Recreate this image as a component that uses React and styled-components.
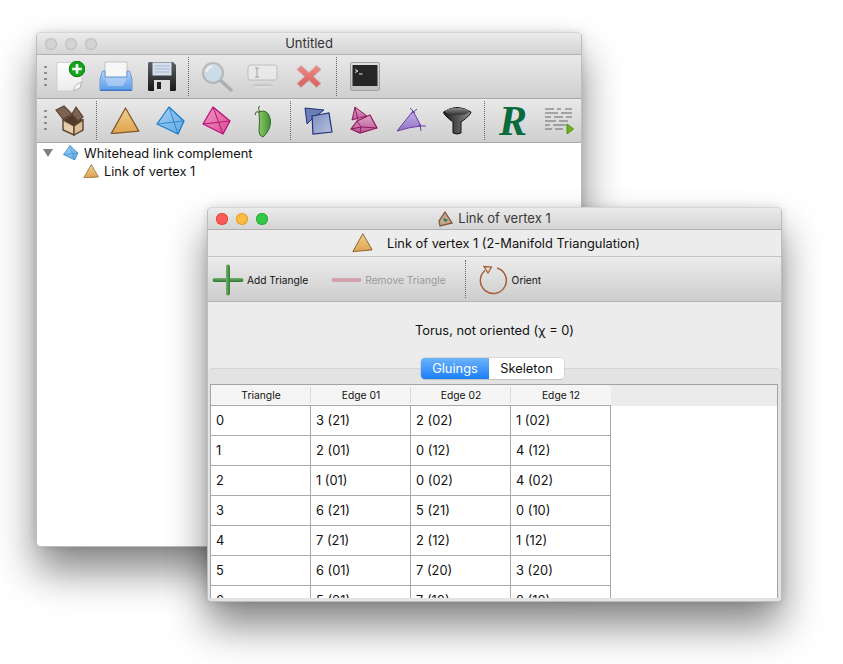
import React from "react";
import styled, { createGlobalStyle } from "styled-components";

const GlobalStyle = createGlobalStyle`
  html, body {
    margin: 0;
    padding: 0;
    background: #fff;
    font-family: "Inter", "Liberation Sans", sans-serif;
    font-size: 12.85px;
    color: #111;
  }
`;

const Desktop = styled.div`
  position: relative;
  width: 843px;
  height: 664px;
  overflow: hidden;
  background: #fff;
`;

const Window = styled.div`
  position: absolute;
  left: ${(p) => p.$x}px;
  top: ${(p) => p.$y}px;
  width: ${(p) => p.$w}px;
  height: ${(p) => p.$h}px;
  display: flex;
  flex-direction: column;
  box-sizing: border-box;
  overflow: hidden;
  background: ${(p) => p.$bg};
  border: 1px solid #bdbdbd;
  border-top-color: #d6d6d6;
  border-radius: 5px;
  box-shadow: 0 24px 40px rgba(0, 0, 0, 0.48), 0 0 8px rgba(0, 0, 0, 0.12);
`;

const TitleBar = styled.div`
  position: relative;
  flex: none;
  height: 21px;
  box-sizing: content-box;
  display: flex;
  align-items: center;
  justify-content: center;
  gap: 5px;
  line-height: 23px;
  background: linear-gradient(#ebebeb, #d5d4d5);
  border-bottom: 1px solid #b1b1b1;
  color: ${(p) => (p.$dim ? "#3a3a3a" : "#333")};
  font-size: 13px;
`;

const Lights = styled.div`
  position: absolute;
  left: 8px;
  top: 5px;
  display: flex;
  gap: 8px;
`;

const Light = styled.span`
  width: 12px;
  height: 12px;
  border-radius: 50%;
  background: ${(p) => p.$c};
  box-shadow: inset 0 0 0 1px ${(p) => p.$b};
`;

const Toolbar = styled.div`
  flex: none;
  height: 43px;
  display: flex;
  align-items: stretch;
  padding-left: 7px;
  overflow: hidden;
  background: linear-gradient(#e9e9e9, #cfcfcf);
  border-bottom: 1px solid #a9a9a9;
`;

const Grip = styled.span`
  flex: none;
  width: 3px;
  align-self: center;
  height: 25px;
  background: radial-gradient(circle, #8a8a8a 1.1px, transparent 1.3px) 0 0 / 3px 6px repeat-y;
`;

const Slot = styled.div`
  flex: none;
  width: 46px;
  display: flex;
  align-items: center;
  justify-content: center;
`;

const Sep = styled.span`
  flex: none;
  width: 0;
  margin: 2px 5px 2px ${(p) => p.$l ?? 4}px;
  border-left: 1px dotted #666;
`;

const RGlyph = styled.span`
  font-family: "Liberation Serif", serif;
  font-style: italic;
  font-weight: 700;
  font-size: 42px;
  line-height: 36px;
  color: #0a6b3c;
`;

const Tree = styled.div`
  flex: 1;
  background: #fff;
  padding-top: 1px;
`;

const TreeRow = styled.div`
  height: 18px;
  display: flex;
  align-items: center;
  gap: 5px;
  padding-left: ${(p) => p.$indent}px;
`;

const Disclosure = styled.span`
  width: 0;
  height: 0;
  margin-right: 5px;
  border-left: 5px solid transparent;
  border-right: 5px solid transparent;
  border-top: 8px solid #808080;
`;

const Header = styled.div`
  flex: none;
  height: 26px;
  display: flex;
  align-items: center;
  justify-content: center;
  gap: 14px;
  padding-left: 3px;
  background: #ececec;
  border-bottom: 1px solid #c4c4c4;
`;

const ActionBar = styled.div`
  flex: none;
  height: 44px;
  display: flex;
  align-items: center;
  padding-left: 4px;
  background: linear-gradient(#ececec, #cdcdcd);
  border-bottom: 1px solid #b4b4b4;
`;

const Action = styled.div`
  display: flex;
  align-items: center;
  gap: ${(p) => p.$gap}px;
  margin-right: ${(p) => p.$mr ?? 0}px;
  padding-top: 2px;
  font-size: 10.2px;
  color: ${(p) => (p.$off ? "#9a9a9a" : "#111")};
`;

const ActionSep = styled.span`
  align-self: stretch;
  width: 0;
  margin: 3px 12px 3px 0;
  border-left: 1px dotted #666;
`;

const Summary = styled.div`
  flex: none;
  height: 56px;
  display: flex;
  align-items: center;
  justify-content: center;
  background: #ececec;
`;

const Pane = styled.div`
  flex: 1;
  min-height: 0;
  display: flex;
  flex-direction: column;
  background: #ececec;
`;

const Tabs = styled.div`
  position: relative;
  z-index: 1;
  flex: none;
  align-self: flex-start;
  margin-left: 213px;
  display: flex;
  height: 21px;
  border-radius: 4px;
  overflow: hidden;
  background: #fff;
  box-shadow: 0 0 0 0.5px #c2c2c2, 0 1px 1px rgba(0, 0, 0, 0.15);
`;

const Tab = styled.div`
  width: ${(p) => p.$w}px;
  display: flex;
  align-items: center;
  justify-content: center;
  color: ${(p) => (p.$on ? "#fff" : "#111")};
  background: ${(p) => (p.$on ? "linear-gradient(#6cb3fa, #1a7ff8)" : "#fff")};
`;

const TabBody = styled.div`
  flex: 1;
  min-height: 0;
  margin-top: -11px;
  padding: 15px 3px 3px 2px;
  display: flex;
  background: #e3e3e3;
  border-top: 1px solid #d6d6d6;
  border-radius: 5px 5px 0 0;
`;

const Table = styled.div`
  flex: 1;
  min-height: 0;
  overflow: hidden;
  background: #fff;
  border: 1px solid #a3a3a3;
  border-bottom: none;
`;

const HeadRow = styled.div`
  height: 21px;
  display: flex;
  background: #ebebeb;
`;

const HeadCell = styled.div`
  position: relative;
  width: 100px;
  box-sizing: border-box;
  display: flex;
  align-items: center;
  justify-content: center;
  font-size: 10.3px;
  background: #f5f5f5;
  border-bottom: 1px solid #a9a9a9;
  &:not(:last-child)::after {
    content: "";
    position: absolute;
    right: 0;
    top: 2px;
    bottom: 2px;
    width: 1px;
    background: #dcdcdc;
  }
`;

const Row = styled.div`
  height: 30px;
  display: flex;
`;

const Cell = styled.div`
  width: 100px;
  box-sizing: border-box;
  display: flex;
  align-items: center;
  padding-left: 5px;
  border-right: 1px solid #a9a9a9;
  border-bottom: 1px solid #a9a9a9;
`;

const rows = [
  ["0", "3 (21)", "2 (02)", "1 (02)"],
  ["1", "2 (01)", "0 (12)", "4 (12)"],
  ["2", "1 (01)", "0 (02)", "4 (02)"],
  ["3", "6 (21)", "5 (21)", "0 (10)"],
  ["4", "7 (21)", "2 (12)", "1 (12)"],
  ["5", "6 (01)", "7 (20)", "3 (20)"],
  ["6", "5 (01)", "7 (10)", "8 (10)"],
];

const Gradient = ({ id, from, to, x2 = 0, y2 = 1 }) => (
  <defs>
    <linearGradient id={id} x1="0" y1="0" x2={x2} y2={y2}>
      <stop offset="0" stopColor={from} />
      <stop offset="1" stopColor={to} />
    </linearGradient>
  </defs>
);

const NewDocIcon = () => (
  <svg width="30" height="31" viewBox="0 0 30 31">
    <Gradient id="docFill" from="#ffffff" to="#ececec" />
    <path d="M2 1.5H27V21L18.5 30H2Z" fill="url(#docFill)" stroke="#cfcfcf" />
    <path d="M18.5 30Q18.5 23 27 21Q25 24 25.5 26.5Z" fill="#f4f4f4" stroke="#b5b5b5" />
    <circle cx="22" cy="8" r="7.8" fill="#11a51a" stroke="#0b7f13" />
    <path d="M22 3.2V12.8M17.2 8H26.8" stroke="#fff" strokeWidth="2.6" />
  </svg>
);

const PrinterIcon = () => (
  <svg width="34" height="32" viewBox="0 0 34 32">
    <Gradient id="printBody" from="#b3d2f6" to="#5b9bea" />
    <rect x="6" y="1" width="22" height="20" fill="#f7f7f7" stroke="#c6c6c6" />
    <path d="M3.5 10H6V16H28V10H30.5L33 18V29.5H1V18Z" fill="url(#printBody)" stroke="#6b9ad6" />
    <path d="M6 17H28L24 25H9Z" fill="#b6d1f3" opacity="0.7" />
    <rect x="1.5" y="28.5" width="31" height="1.5" fill="#3d77c4" />
  </svg>
);

const SaveIcon = () => (
  <svg width="30" height="31" viewBox="0 0 30 31">
    <Gradient id="saveBody" from="#5d6165" to="#17191b" />
    <path d="M1 2.5Q1 1 2.5 1H26L29 4V28.5Q29 30 27.5 30H2.5Q1 30 1 28.5Z" fill="url(#saveBody)" />
    <rect x="5.5" y="1.5" width="19" height="13" fill="#d6e0ec" />
    <path d="M7.5 5H22.5M7.5 8H22.5M7.5 11H22.5" stroke="#a3b5ce" />
    <rect x="7" y="19" width="16" height="11" fill="#dcdcdc" />
    <rect x="10" y="21" width="4" height="7" fill="#222" />
  </svg>
);

const SearchIcon = () => (
  <svg width="32" height="32" viewBox="0 0 32 32" opacity="0.55">
    <path d="M19 19L30 29" stroke="#8d8d8d" strokeWidth="3.4" strokeLinecap="round" />
    <circle cx="12" cy="12" r="10" fill="#bcdcf2" stroke="#9a9a9a" strokeWidth="2.2" />
    <path d="M5.5 11A7 7 0 0 1 11 5.5" stroke="#fff" strokeWidth="2" fill="none" />
  </svg>
);

const FieldIcon = () => (
  <svg width="32" height="26" viewBox="0 0 32 26" opacity="0.6">
    <Gradient id="fieldFade" from="#9a9a9a" to="#ffffff" />
    <rect x="1" y="1" width="29" height="15" rx="2.5" fill="#f0f0f0" stroke="#a8a8a8" />
    <path d="M8 4H12M8 13H12M10 4V13" stroke="#777" fill="none" />
    <ellipse cx="16" cy="22" rx="12" ry="1.6" fill="url(#fieldFade)" />
  </svg>
);

const CrossIcon = () => (
  <svg width="26" height="25" viewBox="0 0 26 25">
    <Gradient id="crossFill" from="#ee8a86" to="#d85f5b" />
    <path
      d="M5 1.5L13 8.5L20.5 1.5L25 5.5L17.5 12.5L25 19.5L20.5 23.5L13 16.5L5 23.5L1 19.5L8.5 12.5L1 5.5Z"
      fill="url(#crossFill)"
      stroke="#c9b1ae"
      strokeLinejoin="round"
    />
  </svg>
);

const TerminalIcon = () => (
  <svg width="30" height="29" viewBox="0 0 30 29">
    <Gradient id="termFrame" from="#dfdfdf" to="#bdbdbd" />
    <rect x="0.5" y="0.5" width="29" height="28" rx="1.5" fill="url(#termFrame)" stroke="#a2a2a2" />
    <rect x="2.5" y="3" width="25" height="21" fill="#262626" />
    <path d="M5 7.5L8 9L5 10.5" stroke="#eee" fill="none" strokeWidth="0.9" />
    <path d="M9 12H12.5" stroke="#eee" strokeWidth="1" />
  </svg>
);

const BoxIcon = () => (
  <svg width="30" height="31" viewBox="0 0 30 31">
    <path d="M8 15L17 10L28 15L19 21Z" fill="#4f3a2a" stroke="#5d4332" />
    <path d="M8 15L19 21V30L8 25Z" fill="#e3cdaa" stroke="#5d4332" strokeWidth="1.4" />
    <path d="M19 21L28 15V25L19 30Z" fill="#d8bd97" stroke="#5d4332" strokeWidth="1.4" />
    <path d="M1 5L9 1L17 9L8 14Z" fill="#7d6350" stroke="#5d4332" strokeWidth="1.2" />
    <path d="M17 9L21 2L28 12L23 16Z" fill="#7d6350" stroke="#5d4332" strokeWidth="1.2" />
  </svg>
);

const TriangleIcon = ({ size = 30, id = "triFill" }) => (
  <svg width={size} height={size * 0.92} viewBox="0 0 30 28">
    <Gradient id={id} from="#efd08e" to="#dfa24e" />
    <path d="M15.5 1L29 24.5L1 27Z" fill={`url(#${id})`} stroke="#81592f" strokeWidth="1.3" strokeLinejoin="round" />
  </svg>
);

const TetraIcon = ({ size = 30, id = "tetFill" }) => (
  <svg width={size} height={size} viewBox="0 0 30 30">
    <Gradient id={id} from="#a9d3f4" to="#5fa6e2" x2={1} />
    <path d="M13 1L28 15L22 28L1 18Z" fill={`url(#${id})`} stroke="#1b7fc9" strokeWidth="1.3" strokeLinejoin="round" />
    <path d="M13 1L22 28M1 18L28 15" stroke="#1b7fc9" strokeWidth="1" opacity="0.8" />
  </svg>
);

const PinkIcon = () => (
  <svg width="30" height="30" viewBox="0 0 30 30">
    <Gradient id="pinkFill" from="#f29ac4" to="#d94a94" x2={1} />
    <path d="M11 1L28 15L21 28L1 18Z" fill="url(#pinkFill)" stroke="#b8127a" strokeWidth="1.3" strokeLinejoin="round" />
    <path d="M11 1L21 28M1 18L28 15" stroke="#b8127a" fill="none" />
  </svg>
);

const PeaIcon = () => (
  <svg width="18" height="34" viewBox="0 0 18 34">
    <Gradient id="peaFill" from="#8cc866" to="#3f8e34" x2={1} y2={0} />
    <path d="M5 8Q14 4 16.5 16Q17 26 9 33Q5 32 5 27Q6 16 5 8Z" fill="url(#peaFill)" stroke="#2f6b25" />
    <path d="M6 8Q3 3 6 2M5 8Q0.5 7 1.5 11" stroke="#3a5b21" fill="none" />
  </svg>
);

const DualIcon = () => (
  <svg width="30" height="30" viewBox="0 0 30 30">
    <Gradient id="dualFill" from="#7c8fc1" to="#b7c1da" x2={1} />
    <path d="M1 2L20 4L8 13L3 18Z" fill="#6a7fb6" stroke="#23307a" />
    <path d="M8 10L25 7L28 26L9 28Z" fill="url(#dualFill)" stroke="#23307a" strokeWidth="1.2" />
  </svg>
);

const PieceIcon = () => (
  <svg width="30" height="30" viewBox="0 0 30 30">
    <Gradient id="pieceFill" from="#e3a6c8" to="#b75593" />
    <path d="M5 1L17 10L2 14Z" fill="url(#pieceFill)" stroke="#8e1a5c" />
    <path d="M5 1L8 14" stroke="#8e1a5c" />
    <path d="M1 23L7 15L20 9L27 22L10 27Z" fill="url(#pieceFill)" stroke="#8e1a5c" strokeWidth="1.2" />
    <path d="M7 15L11 21L27 22M1 23L11 21L10 27" stroke="#8e1a5c" fill="none" />
  </svg>
);

const CuspIcon = () => (
  <svg width="31" height="26" viewBox="0 0 31 26">
    <Gradient id="cuspFill" from="#c7aee3" to="#9274c8" />
    <path d="M17 3L25 18Q14 19 1 23Z" fill="url(#cuspFill)" stroke="#6b3fa5" />
    <path d="M14 0L19 5M21 1L15 6M22 18L30 18M24 16L25 23" stroke="#6b3fa5" />
  </svg>
);

const FunnelIcon = () => (
  <svg width="29" height="29" viewBox="0 0 29 29">
    <Gradient id="funnelBody" from="#1a1a1a" to="#8c8c8c" x2={1} y2={0} />
    <Gradient id="funnelTop" from="#8d8d8d" to="#2e2e2e" />
    <path d="M0.5 6Q14 -3 28 6Q28 9 18 16V27Q14 29 10 27V16Q0.5 9 0.5 6Z" fill="url(#funnelBody)" stroke="#111" />
    <ellipse cx="14" cy="5.5" rx="12" ry="3.6" fill="url(#funnelTop)" />
  </svg>
);

const ScriptIcon = () => (
  <svg width="30" height="27" viewBox="0 0 30 27">
    <path
      d="M1 2H10M13 2H17M21 2H28M1 6H14M17 6H28M1 10H7M10 10H19M22 10H28M1 14H12M15 14H24M1 18H6M9 18H22M1 22H8M11 22H19"
      stroke="#666"
    />
    <path d="M23 17L29.5 22L23 27Z" fill="#6ab41c" stroke="#4f8f10" />
  </svg>
);

const MiniIcon = () => (
  <svg width="15" height="16" viewBox="0 0 15 16">
    <path d="M7 1L14 12L2 15L1 10Z" fill="#c4a68a" stroke="#7f5a42" strokeWidth="1.3" />
    <path d="M5 7L10 9L7 11Z" fill="#1d7d5a" />
  </svg>
);

const PlusIcon = () => (
  <svg width="32" height="32" viewBox="0 0 32 32">
    <Gradient id="plusV" from="#73ad6b" to="#37803a" x2={1} y2={0} />
    <Gradient id="plusH" from="#77b26f" to="#2f7433" />
    <rect x="0.5" y="14" width="31" height="4" rx="2" fill="url(#plusH)" />
    <rect x="14" y="0.5" width="4" height="31" rx="2" fill="url(#plusV)" />
  </svg>
);

const MinusIcon = () => (
  <svg width="32" height="6" viewBox="0 0 32 6">
    <rect x="0.5" y="1" width="30" height="4" rx="2" fill="#d3a2ad" />
  </svg>
);

const OrientIcon = () => (
  <svg width="30" height="30" viewBox="0 0 30 30">
    <path d="M7 5.5A13 13 0 1 0 19 3" fill="none" stroke="#a3613c" strokeWidth="1.5" />
    <path d="M6 1.5L13.5 2L10 8Z" fill="#eadccf" stroke="#a3613c" strokeWidth="1.3" />
  </svg>
);

export default function App() {
  return (
    <>
      <GlobalStyle />
      <Desktop>
        <Window $x={36} $y={32} $w={546} $h={515} $bg="#fff">
          <TitleBar>
            <Lights>
              <Light $c="#d3d3d3" $b="#bfbfbf" />
              <Light $c="#d3d3d3" $b="#bfbfbf" />
              <Light $c="#d3d3d3" $b="#bfbfbf" />
            </Lights>
            <span>Untitled</span>
          </TitleBar>
          <Toolbar>
            <Grip />
            <Slot><NewDocIcon /></Slot>
            <Slot><PrinterIcon /></Slot>
            <Slot><SaveIcon /></Slot>
            <Sep $l={3} />
            <Slot><SearchIcon /></Slot>
            <Slot><FieldIcon /></Slot>
            <Slot><CrossIcon /></Slot>
            <Sep />
            <Slot><TerminalIcon /></Slot>
          </Toolbar>
          <Toolbar>
            <Grip />
            <Slot><BoxIcon /></Slot>
            <Sep $l={3} />
            <Slot><TriangleIcon /></Slot>
            <Slot><TetraIcon /></Slot>
            <Slot><PinkIcon /></Slot>
            <Slot><PeaIcon /></Slot>
            <Sep />
            <Slot><DualIcon /></Slot>
            <Slot><PieceIcon /></Slot>
            <Slot><CuspIcon /></Slot>
            <Slot><FunnelIcon /></Slot>
            <Sep />
            <Slot><RGlyph>R</RGlyph></Slot>
            <Slot><ScriptIcon /></Slot>
          </Toolbar>
          <Tree>
            <TreeRow $indent={6}>
              <Disclosure />
              <TetraIcon size={16} id="tetSmall" />
              Whitehead link complement
            </TreeRow>
            <TreeRow $indent={46}>
              <TriangleIcon size={16} id="triSmall" />
              Link of vertex 1
            </TreeRow>
          </Tree>
        </Window>

        <Window $x={207} $y={207} $w={575} $h={395} $bg="#ececec">
          <TitleBar $dim>
            <Lights>
              <Light $c="#fc5b57" $b="#e5463f" />
              <Light $c="#fdbc40" $b="#e0a132" />
              <Light $c="#34c749" $b="#2cae3a" />
            </Lights>
            <MiniIcon />
            <span>Link of vertex 1</span>
          </TitleBar>
          <Header>
            <TriangleIcon size={21} id="triHead" />
            Link of vertex 1 (2-Manifold Triangulation)
          </Header>
          <ActionBar>
            <Action $mr={23} $gap={3}>
              <PlusIcon />
              Add Triangle
            </Action>
            <Action $mr={19} $gap={2} $off>
              <MinusIcon />
              Remove Triangle
            </Action>
            <ActionSep />
            <Action $gap={4}>
              <OrientIcon />
              Orient
            </Action>
          </ActionBar>
          <Summary>Torus, not oriented (χ = 0)</Summary>
          <Pane>
            <Tabs>
              <Tab $w={68} $on>Gluings</Tab>
              <Tab $w={75}>Skeleton</Tab>
            </Tabs>
            <TabBody>
              <Table>
                <HeadRow>
                  <HeadCell>Triangle</HeadCell>
                  <HeadCell>Edge 01</HeadCell>
                  <HeadCell>Edge 02</HeadCell>
                  <HeadCell>Edge 12</HeadCell>
                </HeadRow>
                {rows.map((cells) => (
                  <Row key={cells[0]}>
                    {cells.map((text) => (
                      <Cell key={text}>{text}</Cell>
                    ))}
                  </Row>
                ))}
              </Table>
            </TabBody>
          </Pane>
        </Window>
      </Desktop>
    </>
  );
}
